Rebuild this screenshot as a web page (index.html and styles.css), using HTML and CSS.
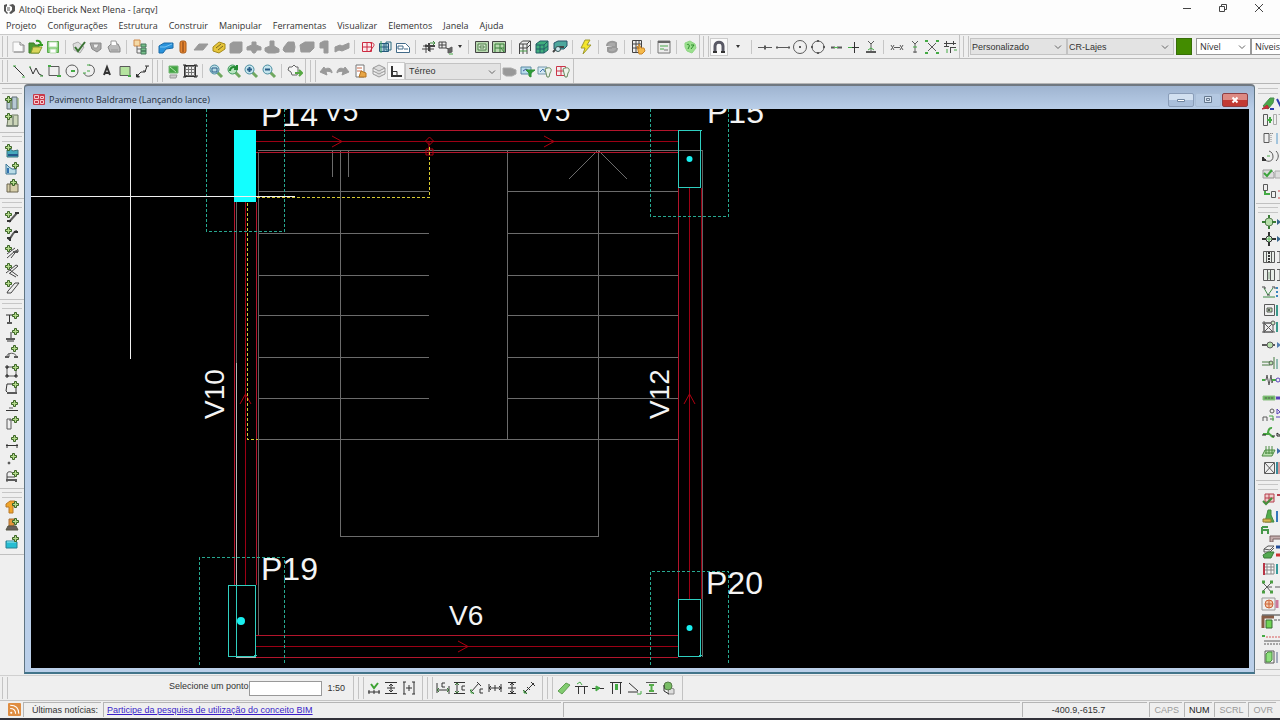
FILE: index.html
```html
<!DOCTYPE html>
<html lang="pt-BR">
<head>
<meta charset="utf-8">
<title>AltoQi Eberick Next Plena - [arqv]</title>
<link rel="stylesheet" href="styles.css">
</head>
<body>
<svg class="sprite" aria-hidden="true">
  <symbol id="plus" viewBox="0 0 7 7"><path d="M2.500 .5h2v2h2v2h-2v2h-2v-2h-2v-2h2z" fill="#b5dc8c" stroke="#3c6426"/></symbol>
  <symbol id="chev" viewBox="0 0 8 8"><path d="M1 2.500l3 3 3-3" fill="none" stroke="#666"/></symbol>
</svg>

<header class="titlebar">
  <svg class="logo" viewBox="0 0 12 12"><path d="M1 2l3-1v2l-1 1v4l2 2-1 1-3-3zM6 2l4-1 2 2v5l-4 3-2-1 3-3V4z" fill="#555"/><path d="M4 4h3v4H4z" fill="#aaa"/></svg>
  <h1 class="app-name">AltoQi Eberick Next Plena - [arqv]</h1>
  <div class="window-buttons">
    <button aria-label="Minimizar"><svg viewBox="0 0 10 10"><path d="M1 5.500h8"/></svg></button>
    <button aria-label="Restaurar"><svg viewBox="0 0 10 10"><path d="M1.500 3.500h5v5h-5zM3.500 3V1.500h5v5H7"/></svg></button>
    <button aria-label="Fechar"><svg viewBox="0 0 10 10"><path d="M1 1l8 8M9 1l-8 8"/></svg></button>
  </div>
</header>

<nav class="menubar">
  <button>Projeto</button><button>Configurações</button><button>Estrutura</button><button>Construir</button><button>Manipular</button><button>Ferramentas</button><button>Visualizar</button><button>Elementos</button><button>Janela</button><button>Ajuda</button>
</nav>

<div class="toolbar main" role="toolbar" aria-label="Principal">
  <div class="band">
    <div class="group n3">
      <button aria-label="Novo"><svg viewBox="0 0 16 16"><path d="M3 3h7l3 3v7H3z" fill="#fafafa" stroke="#bbb"/><path d="M10 3v3h4v7H4" stroke="#888"/></svg></button>
      <button aria-label="Abrir"><svg viewBox="0 0 16 16"><path d="M2 4h5l1 2h4v8H2z" fill="#4c9a33" stroke="#3b7d28"/><path d="M4 14l2-6h9l-3 6z" fill="#d9d65a" stroke="#8a9a30"/><path d="M9 2c3-1 5 1 5 4M11 6h5" stroke="#2f9a20" stroke-width="2"/></svg></button>
      <button aria-label="Salvar"><svg viewBox="0 0 16 16"><path d="M2.500 2.500h11v11h-11z" fill="#7fcf72" stroke="#5aa84d"/><path d="M4 3h8v5H4zM5 10h6v4H5z" fill="#fff" stroke="#b9deb2"/></svg></button>
    </div><i class="sep"></i>
    <div class="group n3">
      <button aria-label="Configurar projeto"><svg viewBox="0 0 16 16"><path d="M2 5l5-2 6 5-4 6-6-3z" fill="#ddd" stroke="#aaa"/><path d="M4 8l3 4 7-9" stroke="#397232" stroke-width="2"/></svg></button>
      <button aria-label="Plotter"><svg viewBox="0 0 16 16"><path d="M2 4h11v6l-4 3-5-3z" fill="#aaa" stroke="#888"/><path d="M5 5h6l-2 4H6z" fill="#eee" stroke="#999"/></svg></button>
      <button aria-label="Imprimir"><svg viewBox="0 0 16 16"><path d="M2 8l3-3h7l2 4v4H4z" fill="#bbb" stroke="#888"/><path d="M5 6V2h5l1 4M5 11h7" fill="#fff" stroke="#999"/></svg></button>
    </div><i class="sep"></i>
    <div class="group n1">
      <button aria-label="Árvore do projeto"><svg viewBox="0 0 16 16"><path d="M2 1h6v6H2z" fill="#f4d9a6" stroke="#d08a4a"/><path d="M5 7v7h4M5 10h4" stroke="#666"/><path d="M9 5h5v3H9zM9 9h5v3H9zM9 12h5v3H9z" fill="#76c08a" stroke="#44775a"/></svg></button>
    </div><i class="sep"></i>
    <div class="group n11">
      <button aria-label="Viga"><svg viewBox="0 0 16 16"><path d="M1 7l5-3h9v5l-7 1-3 4H1z" fill="#2a93dc" stroke="#1a6aa8"/><path d="M2 8h5l7-3" stroke="#79c4f2"/></svg></button>
      <button aria-label="Pilar"><svg viewBox="0 0 16 16"><rect x="5" y="2" width="6" height="12" rx="2" fill="#e58530" stroke="#a85a18"/><path d="M8 3v10" stroke="#7c3c10"/></svg></button>
      <button aria-label="Laje"><svg viewBox="0 0 16 16"><path d="M1 11l5-6h9l-5 6z" fill="#999" stroke="#999"/></svg></button>
      <button aria-label="Escada"><svg viewBox="0 0 16 16"><path d="M2 8l6-5 6 2v5l-6 4-6-2z" fill="#e6c53a" stroke="#a58a1c"/><path d="M5 9l5-4M7 11l5-4" stroke="#7c6a20"/></svg></button>
      <button aria-label="Sólido"><svg viewBox="0 0 16 16"><path d="M2 5l3-2h9v9l-2 2H2z" fill="#999" stroke="#999"/></svg></button>
      <button aria-label="Bloco"><svg viewBox="0 0 16 16"><path d="M6 3h4v3l5 2v3h-4l-2 3H7l-2-3H1V8l5-2z" fill="#999" stroke="#999"/></svg></button>
      <button aria-label="Sapata"><svg viewBox="0 0 16 16"><path d="M6 2h4v5l5 3v3l-4 1H4l-3-2v-3l5-2z" fill="#999" stroke="#999"/></svg></button>
      <button aria-label="Tubulão"><svg viewBox="0 0 16 16"><path d="M3 8l4-5h6l1 5-1 5H4l-2-2z" fill="#999" stroke="#999"/></svg></button>
      <button aria-label="Reservatório"><svg viewBox="0 0 16 16"><path d="M1 6l5-3h9v6l-4 4H2z" fill="#999" stroke="#999"/></svg></button>
      <button aria-label="Muro"><svg viewBox="0 0 16 16"><path d="M3 4l4-2h4v12H7V9H3z" fill="#999" stroke="#999"/></svg></button>
      <button aria-label="Rampa"><svg viewBox="0 0 16 16"><path d="M1 8l5-2 2 1 7-3v5l-7 3-3-1-4 2z" fill="#999" stroke="#999"/></svg></button>
    </div><i class="sep"></i>
    <div class="group n3">
      <button aria-label="Croqui"><svg viewBox="0 0 16 16"><path d="M2.500 3.500h9v9h-9zM7 3v10M2 8h9" stroke="#cc2940" fill="#fbe9ec"/><path d="M10 4c4-1 5 2 3 4l-3 4" stroke="#cc2940"/></svg></button>
      <button aria-label="Pórtico"><svg viewBox="0 0 16 16"><path d="M2.500 4.500h9v8h-9zM7 4v9M2 8h10" stroke="#22577a" fill="#a9cbd9"/><path d="M9 3h5v8h-5z" stroke="#296a80"/><path d="M4 2v12" stroke="#37a060"/></svg></button>
      <button aria-label="Prancha"><svg viewBox="0 0 16 16"><path d="M1.500 4.500h9l4 4v5h-13z" fill="#fff" stroke="#416a88"/><path d="M3 7h5v3H3zM9 10h4" stroke="#416a88"/></svg></button>
    </div><i class="sep"></i>
    <div class="group n2">
      <button aria-label="Subir pavimento"><svg viewBox="0 0 16 16"><path d="M2 7h12M1 10h12M5 5v9M9 6v7" stroke="#444"/><path d="M4 7h10M8 4v8" stroke="#444" stroke-width="2"/><path d="M9 4h5l-2-2M14 4l-2 2" stroke="#3d8a3d"/></svg></button>
      <button aria-label="Descer pavimento"><svg viewBox="0 0 16 16"><path d="M1 3h7v6H1zM4 3v6M1 6h7M8 9l5 2" stroke="#444"/><path d="M10 10l4-2v5l-4 1z" fill="#666"/><path d="M11 15h4" stroke="#44aa44"/></svg></button>
    </div>
    <button class="caret" aria-label="Mais pavimentos"></button><i class="sep"></i>
    <div class="group n2">
      <button aria-label="Detalhamento"><svg viewBox="0 0 16 16"><path d="M1.500 2.500h13v11h-13z" fill="#b9d9b0" stroke="#444"/><path d="M4 5h8v6H4zM6 7h4v2H6z" fill="#ddeed8" stroke="#4f7f4a"/></svg></button>
      <button aria-label="Formas"><svg viewBox="0 0 16 16"><path d="M1.500 2.500h13v11h-13z" fill="#b9d9b0" stroke="#444"/><path d="M4 5h9v8M4 5v8M4 9h9M9 5v8M10 9l3 4" stroke="#39803a"/></svg></button>
    </div><i class="sep"></i>
    <div class="group n3">
      <button aria-label="Pórtico unifilar"><svg viewBox="0 0 16 16"><path d="M2.500 15V5l3-3h8v10M2 5h8l3-3M10 5v10M2 9h8l3-3M6 5v10" stroke="#444"/><path d="M3 12h7" stroke="#46a046"/></svg></button>
      <button aria-label="Pórtico 3D"><svg viewBox="0 0 16 16"><path d="M2 5l4-3h8v9l-4 3H2z" fill="#3fae7c" stroke="#235d66"/><path d="M2 6h8l4-4M10 6v8M2 10h8l4-3M6 6v8" stroke="#235d66"/></svg></button>
      <button aria-label="Visualizar 3D"><svg viewBox="0 0 16 16"><path d="M2 4l4-2h9v5l-3 3H2z" fill="#4da79d" stroke="#28556a"/><path d="M1 13l5-5h6" stroke="#444" stroke-width="2"/><circle cx="6" cy="10" r="2.500" fill="#cde6ee" stroke="#355"/></svg></button>
    </div><i class="sep"></i>
    <div class="group n1"><button aria-label="Processar"><svg viewBox="0 0 16 16"><path d="M7 1h5l-3 5h4l-8 9 2-6H3z" fill="#f4e62c" stroke="#9f9a30"/></svg></button></div><i class="sep"></i>
    <div class="group n1"><button aria-label="Recalcular"><svg viewBox="0 0 16 16"><path d="M3 7c0-5 7-5 9-3v4H8M13 9c0 5-7 5-9 3V9h4" fill="#aaa" stroke="#999" stroke-width="2"/></svg></button></div><i class="sep"></i>
    <div class="group n1"><button aria-label="Selecionar painel"><svg viewBox="0 0 16 16"><path d="M2.500 1.500h9v12h-9zM2 5h10M2 9h8M6 1v13M9 1v8" stroke="#444"/><path d="M7 7l2 3V5l2 4 3 0 1 3-3 3H9z" fill="#f5b94a" stroke="#c98528"/></svg></button></div><i class="sep"></i>
    <div class="group n1"><button aria-label="Relatório"><svg viewBox="0 0 16 16"><path d="M2 2h12v12H2z" fill="#ececec" stroke="#777"/><path d="M2 3h12" stroke="#666" stroke-width="2"/><path d="M4 7h8M4 10h4" stroke="#4aa84a"/><path d="M8 11h4" stroke="#777"/></svg></button></div><i class="sep"></i>
    <div class="group n1"><button aria-label="Ajuda do programa"><svg viewBox="0 0 16 16"><path d="M3 4l5-2 5 3 1 4-4 5-5-2-2-4z" fill="#9be08e" stroke="#8fd684"/><path d="M5 6c1-2 3 0 2 2l-1 2M9 6h3l-3 4" stroke="#2d8c2b"/></svg></button></div>
  </div>
  <div class="band">
    <div class="group n1"><button class="pressed" aria-label="Capturar"><svg viewBox="0 0 16 16"><path d="M4 13V7c0-5 8-5 8 0v6" stroke="#5a5a66" stroke-width="3"/><path d="M2 13h4M10 13h4" stroke="#333" stroke-width="2"/></svg></button></div>
    <button class="caret wide" aria-label="Opções de captura"></button><i class="sep"></i>
    <div class="group n7">
      <button aria-label="Ponto médio"><svg viewBox="0 0 16 16"><path d="M1 8.500h14"/><path d="M8 6.500v4" stroke-width="2"/></svg></button>
      <button aria-label="Ponto final"><svg viewBox="0 0 16 16"><path d="M1 8.500h14M2 7v3M14 7v3"/></svg></button>
      <button aria-label="Centro"><svg viewBox="0 0 16 16"><circle cx="8" cy="8" r="6.500"/><path d="M7 8h2" stroke-width="2"/></svg></button>
      <button aria-label="Quadrante"><svg viewBox="0 0 16 16"><circle cx="8" cy="8" r="6"/><path d="M8 1v2M8 13v2M1 8h2M13 8h2" stroke-width="2"/></svg></button>
      <button aria-label="Ponto próximo"><svg viewBox="0 0 16 16"><path d="M3 8.500h4M9 8.500h5" stroke-width="2"/><path d="M6 8.500h4" stroke="#5b5"/></svg></button>
      <button aria-label="Interseção"><svg viewBox="0 0 16 16"><path d="M3 8.500h11M9.500 3v11" stroke="#333"/><path d="M3 8.500h4" stroke="#4a4"/></svg></button>
      <button aria-label="Perpendicular"><svg viewBox="0 0 16 16"><path d="M5 2l3 3 3-3M8 5v8"/><path d="M3 13h10" stroke-width="2"/><path d="M5 11l3-2 3 2" stroke="#4a4"/></svg></button>
    </div><i class="sep"></i>
    <div class="group n4">
      <button aria-label="Relativo"><svg viewBox="0 0 16 16"><path d="M2 6l3 5M5 6l-3 5M11 6l3 5M14 6l-3 5M5 8.500h6"/></svg></button>
      <button aria-label="Ortogonal"><svg viewBox="0 0 16 16"><path d="M5 2l3 3 3-3M8 5v9M6 13h4"/><path d="M6 8h4" stroke="#4a4"/></svg></button>
      <button aria-label="Cruzamento"><svg viewBox="0 0 16 16"><path d="M4 4l8 8M12 4l-8 8"/><path d="M1 2h3M12 2h3M1 14h3M12 14h3" stroke="#4a4" stroke-width="2"/></svg></button>
      <button aria-label="Múltiplo"><svg viewBox="0 0 16 16"><path d="M2 4.500h12M4.500 2v5M8 8.500h6M8.500 8v6M11.500 2v4M2 7.500h5" stroke="#444"/><path d="M12 11h3M5 10v4" stroke="#4a4"/></svg></button>
    </div>
  </div>
  <div class="band open">
    <label class="combo c-style"><select aria-label="Estilo"><option>Personalizado</option></select><svg><use href="#chev"/></svg></label>
    <label class="combo c-layer"><select aria-label="Camada"><option>CR-Lajes</option></select><svg><use href="#chev"/></svg></label>
    <button class="swatch" aria-label="Cor"></button>
    <label class="combo white c-level"><select aria-label="Nível"><option>Nível</option></select><svg><use href="#chev"/></svg></label>
    <label class="combo white c-levels"><select aria-label="Níveis"><option>Níveis</option></select></label>
  </div>
</div>

<div class="toolbar draw" role="toolbar" aria-label="Desenho">
  <div class="band">
    <div class="group n8">
      <button aria-label="Linha"><svg viewBox="0 0 16 16"><path d="M3 3l10 10" stroke="#333"/><path d="M2 3h3M11 14h3" stroke="#4a4"/></svg></button>
      <button aria-label="Polilinha"><svg viewBox="0 0 16 16"><path d="M2 4l3 7 3-6 3 6 4 2" stroke="#333"/><path d="M1 4h2M12 13h3" stroke="#4a4"/></svg></button>
      <button aria-label="Retângulo"><svg viewBox="0 0 16 16"><path d="M3 3.500h10v9H3z"/><path d="M2 3h3M11 13h4" stroke="#4a4" stroke-width="2"/></svg></button>
      <button aria-label="Círculo"><svg viewBox="0 0 16 16"><circle cx="8" cy="8" r="6"/><path d="M7 8h4" stroke="#4a4" stroke-width="2"/></svg></button>
      <button aria-label="Arco"><svg viewBox="0 0 16 16"><path d="M8 2c7 0 7 10 1 11-4 1-6-2-6-3"/><path d="M6 8h3M2 10h3M6 2h3" stroke="#4a4"/></svg></button>
      <button aria-label="Texto"><svg viewBox="0 0 16 16"><path d="M5 12l3-8 3 8M6 10h4" stroke="#333" stroke-width="2"/></svg></button>
      <button aria-label="Hachura"><svg viewBox="0 0 16 16"><path d="M3 3.500h10v9H3z" fill="#b5e39f"/><path d="M11 13h3" stroke="#4a4" stroke-width="2"/></svg></button>
      <button aria-label="Chamada"><svg viewBox="0 0 16 16"><path d="M3 13l4-4h4l2-6" stroke="#333"/><path d="M2.500 11v3h3zM11 3h4M9 8h3" fill="#333" stroke="#333"/></svg></button>
    </div>
  </div>
  <div class="band">
    <div class="group n2">
      <button aria-label="Redesenhar"><svg viewBox="0 0 16 16"><path d="M4 3h9v7H4z" fill="#44a444" stroke="#76b876"/><path d="M5 12h7l-1 3H5z" fill="#ccc" stroke="#999"/><path d="M5 4l6 5" stroke="#b4e6b0"/></svg></button>
      <button aria-label="Janela de zoom"><svg viewBox="0 0 16 16"><path d="M3.500 3.500h9v9h-9zM3 6.500h10M3 9.500h10M6.500 3v10M9.500 3v10" stroke="#777"/><path d="M2.500 2.500h11v11h-11z" stroke="#333"/><path d="M1 2h3v2M12 2h3v2M1 14h3v-2M12 14h3v-2" stroke="#222"/></svg></button>
    </div><i class="sep"></i>
    <div class="group n4">
      <button aria-label="Zoom janela"><svg viewBox="0 0 16 16"><path d="M9 9l5 5" stroke="#70a860" stroke-width="3"/><circle cx="6.500" cy="6.500" r="4.500" fill="#b8dbe5" stroke="#4b8da0"/><path d="M4 5h5v4H4z" stroke="#295c87"/></svg></button>
      <button aria-label="Zoom anterior"><svg viewBox="0 0 16 16"><path d="M9 9l5 5" stroke="#70a860" stroke-width="3"/><circle cx="6.500" cy="6.500" r="4.500" fill="#b8e5c0" stroke="#3b985c"/><path d="M4 8c0-4 4-5 7-3M11 2v4H8" stroke="#238a32" stroke-width="2"/></svg></button>
      <button aria-label="Ampliar"><svg viewBox="0 0 16 16"><path d="M9 9l5 5" stroke="#70a860" stroke-width="3"/><circle cx="6.500" cy="6.500" r="4.500" fill="#c4e4ed" stroke="#4b8da0"/><path d="M4 6.500h5M6.500 4v5" stroke="#295c87" stroke-width="2"/></svg></button>
      <button aria-label="Reduzir"><svg viewBox="0 0 16 16"><path d="M9 9l5 5" stroke="#70a860" stroke-width="3"/><circle cx="6.500" cy="6.500" r="4.500" fill="#c4e4ed" stroke="#4b8da0"/><path d="M4 6.500h5" stroke="#295c87" stroke-width="2"/></svg></button>
    </div><i class="sep"></i>
    <div class="group n1"><button aria-label="Mover vista"><svg viewBox="0 0 16 16"><path d="M2 4h3l2-2 2 2h2v5l-1 3H5L4 9 1 7z" fill="#f6f6f6" stroke="#666"/><path d="M8 10h6M12 7l3 3-3 3" stroke="#56a843" stroke-width="2"/></svg></button></div>
  </div>
  <div class="band">
    <div class="group n5">
      <button aria-label="Desfazer"><svg viewBox="0 0 16 16"><path d="M2 9l4-5 1 2c4-2 7 0 7 4-2-2-4-2-6-1l1 3z" fill="#999" stroke="#999"/></svg></button>
      <button aria-label="Refazer"><svg viewBox="0 0 16 16"><path d="M14 9l-4-5-1 2c-4-2-7 0-7 4 2-2 4-2 6-1l-1 3z" fill="#999" stroke="#999"/></svg></button>
      <button aria-label="Propriedades"><svg viewBox="0 0 16 16"><path d="M3 2h8v12H3z" fill="#fff" stroke="#777"/><path d="M4 5h5M4 8h5" stroke="#c64"/><path d="M8 8l5 2v4H6z" fill="#e8a646" stroke="#b57422"/></svg></button>
      <button aria-label="Níveis de desenho"><svg viewBox="0 0 16 16"><path d="M2 5l6-3 6 3-6 3zM2 8l6 3 6-3M2 11l6 3 6-3M2 5v6M14 5v6" fill="#ddd" stroke="#999"/></svg></button>
      <button class="pressed" aria-label="Modo ortogonal"><svg viewBox="0 0 16 16"><path d="M4 3v10h10" stroke="#333" stroke-width="2"/><path d="M4 8.500h5v5" stroke="#333"/></svg></button>
    </div>
    <label class="combo c-floor"><select aria-label="Pavimento"><option>Térreo</option></select><svg><use href="#chev"/></svg></label>
    <div class="group n4">
      <button aria-label="Piso anterior"><svg viewBox="0 0 16 16"><path d="M1 5h8l5 2v4l-4 2H4l-3-2z" fill="#999" stroke="#aaa"/></svg></button>
      <button aria-label="Filtrar"><svg viewBox="0 0 16 16"><path d="M1 4h10v7H1z" fill="#b7dcec" stroke="#5b89a2"/><path d="M3 8l3-2 3 2" stroke="#459"/><path d="M6 7h9l-4 3v4l-2-1v-3z" fill="#2f9f36" stroke="#2f8f36"/></svg></button>
      <button aria-label="Pesquisar vista"><svg viewBox="0 0 16 16"><path d="M1 4h9v7H1z" fill="#d4e8f4" stroke="#79a"/><path d="M3 9l3-3 2 3" stroke="#47a"/><path d="M8 6c5-3 8 0 5 4l-1 4h-2l-1-4z" fill="#eef5ea" stroke="#698a60"/></svg></button>
      <button aria-label="Pesquisar croqui"><svg viewBox="0 0 16 16"><path d="M1.500 3.500h9v9h-9zM6 3v10M1 8h10" stroke="#cc3448"/><path d="M8 6c5-3 8 0 5 4l-1 4h-2l-1-4z" fill="#eef5ea" stroke="#698a60"/></svg></button>
    </div>
  </div>
</div>

<main class="workspace">
  <aside class="side" role="toolbar" aria-label="Lançamento">
    <div class="stack m2">
      <button aria-label="Adicionar pilar"><svg viewBox="0 0 16 16"><path d="M3 4h4v10H3zM8 2h5v12H8z" fill="#b7c9d3" stroke="#5c6a72"/><path d="M7 4v10M14 3v11" stroke="#7fa05e"/><use href="#plus" x="1" y="1" width="7" height="7"/></svg></button>
      <button aria-label="Adicionar seção"><svg viewBox="0 0 16 16"><path d="M4 6l4-3h6v11H3z" fill="#ccd5b9" stroke="#6f7a64"/><path d="M9 4v9M2 14h12" stroke="#56645a"/><use href="#plus" x="1" y="1" width="7" height="7"/></svg></button>
    </div>
    <div class="stack m3">
      <button aria-label="Adicionar laje"><svg viewBox="0 0 16 16"><path d="M3 7l3-1 3 2 5-1v7H3z" fill="#46a9bd" stroke="#3b7480"/><path d="M4 12h10" stroke="#24578a" stroke-width="2"/><use href="#plus" x="1" y="1" width="7" height="7"/></svg></button>
      <button aria-label="Adicionar rampa"><svg viewBox="0 0 16 16"><path d="M2 4v10h10V9H8L5 7z" fill="#b9dbe6" stroke="#3e7795"/><path d="M4 8v5" stroke="#3272b0" stroke-width="2"/><use href="#plus" x="8" y="2" width="7" height="7"/></svg></button>
      <button aria-label="Adicionar abertura"><svg viewBox="0 0 16 16"><path d="M3 6h11v8H3zM6 6v8" fill="#d7cfaa" stroke="#6a654e"/><use href="#plus" x="6" y="1" width="7" height="7"/></svg></button>
    </div>
    <div class="stack m5">
      <button aria-label="Adicionar barra"><svg viewBox="0 0 16 16"><path d="M5 13l8-9" stroke-width="2"/><path d="M3 12h4M11 4h4" stroke="#333" stroke-width="2"/><use href="#plus" x="1" y="2" width="7" height="7"/></svg></button>
      <button aria-label="Adicionar barra curva"><svg viewBox="0 0 16 16"><path d="M4 13c4 1 3-7 9-8" stroke-width="2"/><path d="M3 12h3v3M10 6h4" stroke="#333" stroke-width="2"/><use href="#plus" x="1" y="1" width="7" height="7"/></svg></button>
      <button aria-label="Adicionar viga"><svg viewBox="0 0 16 16"><path d="M3 14l8-7h4M7 14l7-9M3 10l8-6" stroke="#444"/><path d="M9 8h5" stroke-width="2"/><use href="#plus" x="1" y="1" width="7" height="7"/></svg></button>
      <button aria-label="Adicionar cruzamento"><svg viewBox="0 0 16 16"><path d="M2 11l10-8 2 1-8 7M6 8l8 6M5 11l7 4" stroke="#444"/><use href="#plus" x="1" y="1" width="7" height="7"/></svg></button>
      <button aria-label="Adicionar parede"><svg viewBox="0 0 16 16"><path d="M4 12l7-8h4l-8 10H3z" fill="#eee" stroke="#444"/><use href="#plus" x="1" y="1" width="7" height="7"/></svg></button>
    </div>
    <div class="stack m10">
      <button aria-label="Adicionar apoio"><svg viewBox="0 0 16 16"><path d="M2 5h7M5.500 5v8M3 13h5" stroke="#333"/><path d="M3 13h5" stroke-width="2"/><use href="#plus" x="8" y="2" width="7" height="7"/></svg></button>
      <button aria-label="Adicionar carga"><svg viewBox="0 0 16 16"><path d="M7 5v8M3 14h7" stroke="#333"/><path d="M2 12h9" stroke-width="2"/><use href="#plus" x="8" y="1" width="7" height="7"/></svg></button>
      <button aria-label="Adicionar arco"><svg viewBox="0 0 16 16"><path d="M2 12c2-5 9-5 11 0M5 8v4"/><path d="M1 12h4M10 12h4" stroke-width="2"/><use href="#plus" x="7" y="0" width="7" height="7"/></svg></button>
      <button aria-label="Adicionar quadro"><svg viewBox="0 0 16 16"><path d="M3 4h9v9H3z"/><path d="M1 4h4M10 13h4M1 13h4M3 2v4M3 11v4M12 11v4" stroke="#222"/><use href="#plus" x="8" y="1" width="7" height="7"/></svg></button>
      <button aria-label="Adicionar contorno"><svg viewBox="0 0 16 16"><path d="M3 4h9v9H4l-2-2z" stroke="#333"/><path d="M3 13h10" stroke-width="2"/><use href="#plus" x="8" y="1" width="7" height="7"/></svg></button>
      <button aria-label="Adicionar base"><svg viewBox="0 0 16 16"><path d="M2 12.500h12" stroke="#333"/><path d="M5 10h4"/><use href="#plus" x="7" y="2" width="7" height="7"/></svg></button>
      <button aria-label="Adicionar retângulo"><svg viewBox="0 0 16 16"><path d="M3 4h4v10H3zM5 5h8" /><use href="#plus" x="8" y="1" width="7" height="7"/></svg></button>
      <button aria-label="Adicionar cota"><svg viewBox="0 0 16 16"><path d="M2 12.500h12M3 11v4M13 11v4" stroke="#333"/><use href="#plus" x="7" y="2" width="7" height="7"/></svg></button>
      <button aria-label="Adicionar ponto"><svg viewBox="0 0 16 16"><circle cx="5" cy="12" r="1" fill="#333"/><use href="#plus" x="6" y="2" width="7" height="7"/></svg></button>
      <button aria-label="Adicionar texto"><svg viewBox="0 0 16 16"><path d="M3 14V6c0-3 5-3 6 0M3 9h8" stroke="#444"/><path d="M2 12h10v2" stroke-width="2"/><use href="#plus" x="8" y="2" width="7" height="7"/></svg></button>
    </div>
    <div class="stack m3 last">
      <button aria-label="Adicionar estaca"><svg viewBox="0 0 16 16"><path d="M2 5l4-3h5v5H9v7H5V8H2z" fill="#f0a52a" stroke="#b8782a"/><use href="#plus" x="8" y="2" width="7" height="7"/></svg></button>
      <button aria-label="Adicionar sapata"><svg viewBox="0 0 16 16"><path d="M5 3h5v7H5z" fill="#e2943b" stroke="#a86f35"/><path d="M2 14l2-4h8l2 4z" fill="#665f5b" stroke="#554"/><use href="#plus" x="8" y="2" width="7" height="7"/></svg></button>
      <button aria-label="Adicionar viga baldrame"><svg viewBox="0 0 16 16"><path d="M2 7h8l3 1v6H2z" fill="#25bdd2" stroke="#277f91"/><path d="M3 8h9" stroke="#9fe5ee"/><use href="#plus" x="8" y="1" width="7" height="7"/></svg></button>
    </div>
  </aside>

  <section class="mdi" aria-label="Pavimento Baldrame">
    <header class="mdi-title">
      <svg class="mdi-icon" viewBox="0 0 12 11"><rect width="12" height="11" rx="1" fill="#c83a4a"/><path d="M1.500 1.500h4v3h-4zM7.500 2.500h3v2h-3zM1.500 6.500h4v3h-4zM7.500 6.500h3v3h-3z" fill="none" stroke="#f6c9ce"/></svg>
      <h2>Pavimento Baldrame (Lançando lance)</h2>
      <div class="mdi-buttons">
        <button aria-label="Minimizar janela"><svg viewBox="0 0 10 8"><path d="M1.500 3.500h7v2h-7z" fill="#fff" stroke="#7186a0"/></svg></button>
        <button class="flat" aria-label="Restaurar janela"><svg viewBox="0 0 10 8"><path d="M1.500 .5h7v6h-7zM3.500 2.500h3v2h-3z" fill="#d8e4f2" stroke="#66798f"/></svg></button>
        <button class="close" aria-label="Fechar janela"><svg viewBox="0 0 10 8"><path d="M2.500 1.500l5 5M7.500 1.500l-5 5" stroke="#fff" stroke-width="2"/></svg></button>
      </div>
    </header>
    <svg class="drawing" role="img" aria-label="Planta do pavimento">
      <g transform="translate(-31 -109)">
        <g class="stairs">
          <path d="M258 150.500H702M258 191.500H429M258 233.500H429M258 275.500H429M258 315.500H429M258 357.500H429M258 398.500H429M258 439.500H678"/>
          <path d="M507 191.500H678M507 233.500H678M507 275.500H678M507 315.500H678M507 357.500H678M507 398.500H678"/>
          <path d="M507.500 150V439M340.500 150V536.500H598.500V150M332.500 151V177M348.500 151V177"/>
          <path class="smooth" d="M569 179L598 150L627 179"/>
        </g>
        <g class="beams">
          <path class="axis" d="M256 141.500H678M256 646.500H678M245.500 202V585M689.500 188V599"/>
          <path d="M256 130.500H678M256 152.500H678M256 635.500H678"/>
          <path d="M234.500 202V585M256.500 202V585M678.500 188V599M256 657.500H678"/>
          <path class="axis" d="M701.500 188V599"/>
          <path class="arrows" d="M332 136L342 141.500L332 147M544 136L554 141.500L544 147M458 641L468 646.500L458 652M240 404L245.500 394L251 404M684 404L689.500 394L695 404"/>
          <path class="arrows" d="M429.500 137l4 4-4 4-4-4zM426 149h7v6h-7zM429 141v14"/>
        </g>
        <path class="outline" d="M236.500 202V364M258.500 152V635M702.500 150V657"/>
        <path class="edge" d="M236.500 363V657H256"/>
        <g class="offset"><path d="M247.500 198V439.500H258"/><path d="M247 197.500H429.500V147"/></g>
        <g class="footing">
          <path d="M206.500 109V231.500H284.500V109"/>
          <path d="M650.500 109V216.500H728.500V109"/>
          <path d="M199.500 665V557.500H284.500V665"/>
          <path d="M650.500 665V571.500H728.500V665"/>
        </g>
        <g class="columns">
          <rect x="678.500" y="130.500" width="22" height="57"/><circle cx="689.500" cy="159" r="3"/>
          <rect x="228.500" y="585.500" width="27" height="71"/><circle cx="241" cy="621" r="4"/>
          <rect x="678.500" y="599.500" width="22" height="57"/><circle cx="689.500" cy="628" r="3"/>
          <path d="M236.500 586V657M699 130.500h3M699 655.500h3M254 655.500h3"/>
          <rect class="selected" x="234" y="130" width="22" height="72"/>
        </g>
        <path class="cursor" d="M130.500 109V359M31 196.500H295"/>
        <g class="column-names">
          <text x="261" y="126">P14</text><text x="707" y="123">P15</text><text x="261" y="580">P19</text><text x="706" y="594">P20</text>
        </g>
        <g class="beam-names">
          <text x="324" y="121">V5</text><text x="536" y="121">V5</text><text x="449" y="625">V6</text>
          <text transform="translate(224 419) rotate(-90)">V10</text><text transform="translate(669 419) rotate(-90)">V12</text>
        </g>
      </g>
    </svg>
  </section>

  <aside class="side right" role="toolbar" aria-label="Edição">
    <div class="stack m6">
      <button aria-label="Apagar"><svg viewBox="0 0 22 16"><path d="M2 11l7-8h4l-1 5-5 6z" fill="#4ca84a" stroke="#4a8c50"/><path d="M1 14l5-4 2 3z" fill="#d32c38" stroke="#b22c38"/><path d="M9 14h4M16 4l4 8" stroke="#2d3cae" stroke-width="2"/></svg></button>
      <button aria-label="Mover"><svg viewBox="0 0 22 16"><path d="M2.500 2.500h4v11h-4z"/><path d="M12.500 2.500h3v10h-3zM17.500 2.500h3v10" stroke="#aaa"/><path d="M6 8h5M9 5v6" stroke="#4a4" stroke-width="2"/></svg></button>
      <button aria-label="Espelhar"><svg viewBox="0 0 22 16"><path d="M3 3.500h5v9H3z"/><path d="M10 3v10M9 3.500h3" stroke="#888" stroke-dasharray="1"/><path d="M16 3v11" stroke="#579acb"/></svg></button>
      <button aria-label="Rotacionar"><svg viewBox="0 0 22 16"><path d="M3 10c2 5 9 4 9-1 0-3-1-5-4-6M15 3c3 3 3 7 0 10"/><path d="M2 9v3h3" stroke="#333" stroke-width="2"/><path d="M6 8h3" stroke="#4a4"/></svg></button>
      <button aria-label="Confirmar"><svg viewBox="0 0 22 16"><path d="M2 5h8l3 3v5H2z" fill="#ddd" stroke="#999"/><path d="M3 8l3 3 5-6" stroke="#3ba33b" stroke-width="2"/><path d="M14 6h6v7h-6z" fill="#ddd" stroke="#aaa"/></svg></button>
      <button aria-label="Copiar"><svg viewBox="0 0 22 16"><path d="M2.500 1.500h4v6h-4zM10.500 8.500h4v6h-4z"/><path d="M4 8v3h5" stroke="#4a4" stroke-width="2"/><path d="M17 8h4v7h-4" stroke="#c44"/></svg></button>
    </div>
    <div class="stack m15">
      <button aria-label="Posição"><svg viewBox="0 0 22 16"><circle cx="8" cy="8" r="4" fill="#b6dfaa" stroke="#5d7e55"/><path d="M8 1v3M8 12v3M1 8h4M11 8h4" stroke="#397c35" stroke-width="2"/><path d="M16 5l4 3-4 3z" fill="#37658c" stroke="none"/></svg></button>
      <button aria-label="Eixo"><svg viewBox="0 0 22 16"><circle cx="8" cy="8" r="3" stroke="#333"/><path d="M8 1v4M8 11v4M1 8h4M11 8h4" stroke="#333" stroke-width="2"/><path d="M8 5v6M5 8h6" stroke="#5b5"/><path d="M16 5l4 3-4 3z" fill="#37658c" stroke="none"/></svg></button>
      <button aria-label="Seção dupla"><svg viewBox="0 0 22 16"><path d="M2.500 2.500h11v11h-11zM5.500 3v10M10.500 3v10" fill="#e9eee9"/><path d="M8 3v10" stroke="#333" stroke-width="2" stroke-dasharray="2 1"/><path d="M16 2.500h3v11h-3"/></svg></button>
      <button aria-label="Seção simples"><svg viewBox="0 0 22 16"><path d="M2.500 2.500h11v11h-11zM6.500 3v10M9.500 3v10" fill="#e9eee9"/><path d="M8 5v7" stroke="#8a8"/><path d="M16 2.500h3v11h-3"/></svg></button>
      <button aria-label="Nós"><svg viewBox="0 0 22 16"><path d="M2 13h12M3 4l4 7 5-7" stroke="#3d8a47"/><path d="M1 3h3v2M11 3h3v2M6 11h3" stroke="#444"/><path d="M16 3v10" stroke="#3885bd" stroke-width="2" stroke-dasharray="2"/></svg></button>
      <button aria-label="Furo"><svg viewBox="0 0 22 16"><path d="M3.500 2.500h10v11h-10z"/><path d="M6 6h5v4H6z" fill="#b6dfaa"/><path d="M8 7v2" stroke-width="2"/><path d="M16 3v11" stroke="#3b9a8b" stroke-width="2"/></svg></button>
      <button aria-label="Grelha"><svg viewBox="0 0 22 16"><path d="M3 4h9v9H3zM3 4l9 9M12 4l-9 9M1 4h13M3 2v12M1 13h13" /><circle cx="12" cy="4" r="2" fill="#cfe8c8"/><path d="M16 3v10" stroke="#3b9a8b" stroke-width="2"/></svg></button>
      <button aria-label="Articulação"><svg viewBox="0 0 22 16"><circle cx="9" cy="8" r="3" fill="#b6dfaa"/><path d="M1 8h5M12 8h2" stroke-width="2"/><path d="M16 5l4 3-4 3z" fill="#557fb2" stroke="none"/></svg></button>
      <button aria-label="Engaste"><svg viewBox="0 0 22 16"><circle cx="10" cy="8" r="2" fill="#b6dfaa"/><path d="M1 7h8M1 10h8M13 2v12" stroke="#467a40"/><path d="M16 4v10" stroke="#387"/></svg></button>
      <button aria-label="Mola"><svg viewBox="0 0 22 16"><path d="M3 8h2l1-5 2 10 2-10 1 8 1-3h2"/><path d="M1 8h3M11 8h4" stroke="#4a4" stroke-width="2"/><circle cx="17" cy="8" r="2" stroke="#5740b8"/></svg></button>
      <button aria-label="Régua"><svg viewBox="0 0 22 16"><path d="M2 6h12v4H2z" fill="#68b65c" stroke="#8bc084"/><path d="M5 7v2M8 7v2M11 7v2"/><path d="M15 8h5" stroke="#5740b8" stroke-width="3"/></svg></button>
      <button aria-label="Degrau"><svg viewBox="0 0 22 16"><path d="M2 14v-4h4v4M9 12h4"/><circle cx="11" cy="4" r="2"/><path d="M8 9h4v5" stroke="#4a4"/><path d="M16 2l3 3-3 2zM15 10h4" stroke="#5740b8"/></svg></button>
      <button aria-label="Curva"><svg viewBox="0 0 22 16"><path d="M2 9h5c0-7 4-6 4-6M6 8c4 0 4 5 7 4" stroke="#49a743" stroke-width="2"/><path d="M1 10h4M11 11h3M16 8l4 3h-4z" stroke="#222"/></svg></button>
      <button aria-label="Malha"><svg viewBox="0 0 22 16"><path d="M1 13l3-6h10l-3 6z" fill="#b7dfac" stroke="#4c8b43"/><path d="M5 3v8M8 3v8M11 3v8M4 10h8" stroke="#4c8b43"/><path d="M16 5l4 3-4 3z" fill="#3e6caa" stroke="none"/></svg></button>
      <button aria-label="Vazio"><svg viewBox="0 0 22 16"><path d="M3.500 2.500h10v11h-10z"/><path d="M4 3l9 10M13 3L4 13"/><path d="M16 2v12" stroke="#388b9b" stroke-width="2"/><path d="M18 2v12" stroke="#b44"/></svg></button>
    </div>
    <div class="stack m10 last">
      <button aria-label="Verificar croqui"><svg viewBox="0 0 22 16"><path d="M4 3h9v8H4zM8 3v8M4 7h9" stroke="#b63f4d" fill="#ecc"/><path d="M2 10l3 3 6-6" stroke="#448e3c" stroke-width="2"/><path d="M16 4h4v8" stroke="#b63f4d" stroke-width="2"/></svg></button>
      <button aria-label="Limpar"><svg viewBox="0 0 22 16"><path d="M7 2h3v5l3 7H4z" fill="#51ad4a" stroke="#438843"/><path d="M2 11h8v3H2z" fill="#d3b94e" stroke="#947b32"/><path d="M16 3v11" stroke="#37b" stroke-width="2"/></svg></button>
      <button aria-label="Renomear"><svg viewBox="0 0 22 16"><path d="M1 1h6M1 4h5M1 1v7M7 3v5" stroke="#46974a" stroke-width="2"/><path d="M9 10h12v3H12v3H9z" fill="#c4adad" stroke="#796363"/></svg></button>
      <button aria-label="Camadas"><svg viewBox="0 0 22 16"><path d="M3 5l4-3h6l-4 4zM3 5v3h6l4-4" fill="#eee"/><path d="M2 11l5-3h6l-3 6H3z" fill="#53a950" stroke="#3c7b38"/><path d="M15 3h5" stroke="#224c99" stroke-width="3"/><path d="M15 11h5" stroke="#c33" stroke-width="3"/></svg></button>
      <button aria-label="Tabela"><svg viewBox="0 0 22 16"><path d="M3 3h10v10H3zM3 6h10M3 9h10M6 3v10M10 3v10" stroke="#888" fill="#f8f8f8"/><path d="M3 2v12" stroke="#b93445" stroke-width="2"/><path d="M16 3v10" stroke="#399" stroke-width="2"/></svg></button>
      <button aria-label="Ligações"><svg viewBox="0 0 22 16"><path d="M2 4l4 4-4 4M6 8h5M10 4L6 8l4 5M14 8h7"/><path d="M1 3h3M9 3h3M1 13h3M9 13h3" stroke="#4a9d42" stroke-width="3"/></svg></button>
      <button aria-label="Região"><svg viewBox="0 0 22 16"><path d="M1 2h13v12H1z" stroke="#999"/><circle cx="8" cy="8" r="4" fill="#f2c8a9" stroke="#cc6538"/><path d="M4 8h8M8 4v8" stroke="#cc6538"/><path d="M16 4v8" stroke="#c79" stroke-width="3"/></svg></button>
      <button aria-label="Canto"><svg viewBox="0 0 22 16"><path d="M2 14V3h11" stroke="#865b45" stroke-width="3"/><path d="M1 1h20" stroke="#333"/><path d="M5 6h6v8H5z" fill="#70d354" stroke="#376b31"/><path d="M13 6h8" stroke-dasharray="3 1"/></svg></button>
      <button aria-label="Estilo de linha"><svg viewBox="0 0 22 16"><path d="M1 4h3" stroke="#4a4" stroke-width="2"/><path d="M5 5h16" stroke="#d75c5c" stroke-dasharray="2 1"/><path d="M3 9h18"/><path d="M3 12h18" stroke-dasharray="2 1"/></svg></button>
      <button aria-label="Bloco verde"><svg viewBox="0 0 22 16"><path d="M4 2h9v12H4z" fill="#eee"/><path d="M5 5l2-2h4v8l-2 2H5z" fill="#8de07c" stroke="#468a3c"/><path d="M16 3v11" stroke="#568" stroke-width="1"/></svg></button>
    </div>
  </aside>
</main>

<div class="toolbar command" role="toolbar" aria-label="Comandos">
  <div class="band prompt">
    <label for="cmd">Selecione um ponto</label><input id="cmd" type="text"><span class="scale">1:50</span>
  </div>
  <div class="band">
    <div class="group n3">
      <button aria-label="Validar"><svg viewBox="0 0 16 16"><path d="M5 4l3 4 4-5" stroke="#3da333" stroke-width="2"/><path d="M2 12h12M3 10v4M8 10v4M13 10v4" stroke="#333"/></svg></button>
      <button aria-label="Distribuir vertical"><svg viewBox="0 0 16 16"><path d="M2 2.500h12M2 13.500h12M8 4v8M6 6l2-2 2 2M6 10l2 2 2-2M4 8h8" stroke="#333"/></svg></button>
      <button aria-label="Distribuir horizontal"><svg viewBox="0 0 16 16"><path d="M3 2v12M13 2v12M5 8h6M8 5v6M2 2h3M2 14h3M11 2h3M11 14h3" stroke="#333"/></svg></button>
    </div>
  </div>
  <div class="band">
    <div class="group n6">
      <button aria-label="Cota horizontal"><svg viewBox="0 0 16 16"><path d="M2 3v10M14 6v8M2 10h12M10 3H7v4h3" stroke="#333"/><path d="M4 8l-2 2 2 2M12 8l2 2-2 2" stroke="#397c35"/></svg></button>
      <button aria-label="Cota vertical"><svg viewBox="0 0 16 16"><path d="M2 2.500h11M2 13.500h11M5 3v10M13 6h-3v4h3" stroke="#333"/><path d="M3 5l2-2 2 2M3 11l2 2 2-2" stroke="#397c35"/></svg></button>
      <button aria-label="Cota inclinada"><svg viewBox="0 0 16 16"><path d="M2 12l8-9M1 10l4 4M8 2l4 4M14 9h-3v4h3" stroke="#333"/><path d="M2 9v4h3" stroke="#4a4"/></svg></button>
      <button aria-label="Cota contínua"><svg viewBox="0 0 16 16"><path d="M2 8h13M2 4v8M8 5v6M14 4v8M4 6L2 8l2 2M12 6l2 2-2 2" stroke="#333"/></svg></button>
      <button aria-label="Cota acumulada"><svg viewBox="0 0 16 16"><path d="M4 2.500h8M4 8h8M4 13.500h8M8 3v10M6 5l2-2 2 2M6 11l2 2 2-2" stroke="#333"/></svg></button>
      <button aria-label="Cota alinhada"><svg viewBox="0 0 16 16"><path d="M3 13L13 3M2 10l4 4M10 2l4 4M6 7l3 3" stroke="#333"/><path d="M3 10v3h3" stroke="#4a4"/></svg></button>
    </div>
  </div>
  <div class="band">
    <div class="group n7">
      <button aria-label="Medir"><svg viewBox="0 0 16 16"><path d="M3 11l8-8 4 2-8 9z" fill="#82cc70" stroke="#5f9e51"/></svg></button>
      <button aria-label="Medir viga"><svg viewBox="0 0 16 16"><path d="M2 6.500h13M5.500 7v7M11.500 7v7" stroke="#333"/><path d="M4 4l3-2 2 3" stroke="#4a4"/></svg></button>
      <button aria-label="Alinhar"><svg viewBox="0 0 16 16"><path d="M2 8.500h12" stroke="#333"/><path d="M6 6l4 2-4 3z" fill="#4a4" stroke="#4a4"/></svg></button>
      <button aria-label="Suspender"><svg viewBox="0 0 16 16"><path d="M2 2.500h12M4.500 3v11M12.500 3v11" stroke="#333"/><path d="M8.500 4v6" stroke="#4a4" stroke-width="3"/></svg></button>
      <button aria-label="Ângulo"><svg viewBox="0 0 16 16"><path d="M3 3l9 8M2 12h10" stroke="#333"/><path d="M11 14h4v-3" stroke="#4a4"/></svg></button>
      <button aria-label="Altura"><svg viewBox="0 0 16 16"><path d="M3 2.500h11M3 13.500h11"/><path d="M8.500 4v8M6 5h5M6 11h5" stroke="#55ad49" stroke-width="2"/></svg></button>
      <button aria-label="Área"><svg viewBox="0 0 16 16"><path d="M8 7l5 2v5H7z" fill="#ddd" stroke="#888"/><circle cx="7" cy="6" r="4" fill="#79bd65" stroke="#567b48"/><path d="M3 5v6l5 3" stroke="#333"/></svg></button>
    </div>
  </div>
</div>

<footer class="statusbar">
  <svg class="rss" viewBox="0 0 12 12"><rect width="12" height="12" rx="1" fill="#df8d42"/><circle cx="3" cy="9" r="1" fill="#fff"/><path d="M2 5c3 0 5 2 5 5M2 2c5 0 8 3 8 8" fill="none" stroke="#fff"/></svg>
  <span class="cell news-label">Últimas notícias:</span>
  <span class="cell news"><a href="#">Participe da pesquisa de utilização do conceito BIM</a></span>
  <span class="cell spacer"></span>
  <output class="cell coords">-400.9,-615.7</output>
  <span class="cell key">CAPS</span><span class="cell key on">NUM</span><span class="cell key">SCRL</span><span class="cell key">OVR</span>
</footer>
</body>
</html>
```
FILE: styles.css
```css
* { box-sizing: border-box; }

body {
  margin: 0;
  height: 100vh;
  display: flex;
  flex-direction: column;
  overflow: hidden;
  background: #efefef;
  color: #333;
  font: 9px/12px "Liberation Sans", Arial, sans-serif;
  border-bottom: 2px solid #32323a;
}

button, select, input { font: inherit; color: inherit; margin: 0; padding: 0; border: 0; background: none; border-radius: 0; }
h1, h2 { margin: 0; font-weight: normal; }
svg { display: block; }
.sprite { position: absolute; width: 0; height: 0; }

/* Title and menus */
.titlebar { display: flex; align-items: center; height: 18px; padding: 0 12px 0 3px; gap: 4px; background: #fdfdfd; flex: none; }
.logo { width: 12px; height: 12px; }
.app-name { font: 9px/14px "Open Sans", sans-serif; flex: 1; padding-top: 1px; }
.window-buttons { display: flex; gap: 26px; padding: 0 4px 2px 0; }
.window-buttons svg { width: 10px; height: 10px; fill: none; stroke: #444; }

.menubar { display: flex; gap: 11px; height: 16px; padding: 0 6px; background: #fdfdfd; flex: none; }
.menubar button { font: 9px/16px "Open Sans", sans-serif; }

/* Toolbars */
.toolbar { display: flex; flex: none; height: 25px; overflow: hidden; border-top: 1px solid #c9c9c9; }
.toolbar + .toolbar { border-top-color: #bbb; }
.band { display: flex; align-items: center; flex: none; padding: 0 2px 0 9px; border-right: 1px solid #c2c2c2; position: relative; }
.band + .band { margin-left: 2px; }
.band::before { content: ""; position: absolute; left: 2px; top: 1px; bottom: 1px; width: 4px; border: solid #c4c4c4; border-width: 0 1px; }
.main { height: 24px; }
.main .band { padding-right: 0; }
.main .band + .band { margin-left: 1px; }
.draw .band { padding-right: 1px; }
.draw .band:first-child { padding-left: 10px; }
.band.open { border-right: 0; }
.group { display: grid; grid-auto-flow: column; grid-auto-columns: 1fr; }
.group button, .stack button { display: grid; place-items: center; height: 18px; }
.group svg { width: 16px; height: 16px; }
.group svg, .stack svg { fill: none; stroke: #5a5a5a; }
.n1 { width: 18px; }
.n2 { width: 35px; }
.n3 { width: 53px; }
.n4 { width: 71px; }
.n5 { width: 88px; }
.n6 { width: 104px; }
.n7 { width: 124px; }
.n8 { width: 141px; }
.n11 { width: 194px; }
.sep { width: 1px; height: 14px; margin: 0 4px 0 3px; background: #c6c6c6; }
.pressed { background: #fafafa; outline: 1px solid #ccc; outline-offset: -1px; }
.caret { width: 10px; height: 16px; display: grid; place-items: center; }
.caret.wide { width: 20px; }
.caret::before { content: ""; border: solid transparent; border-width: 3px 2px 0; border-top-color: #333; }

.combo { position: relative; height: 17px; border: 1px solid #c3c3c3; background: #e3e3e3; }
.combo select { display: block; width: 100%; height: 100%; padding-left: 3px; appearance: none; }
.combo svg { position: absolute; right: 4px; top: 4px; width: 8px; height: 8px; pointer-events: none; }
.combo.white { background: #fff; border-color: #999; font: 9px/12px "Open Sans", sans-serif; }
.c-style { width: 97px; }
.c-layer { width: 107px; }
.c-style select, .c-layer select { padding-left: 1px; }
.c-level { width: 55px; }
.c-levels { width: 60px; }
.c-floor { width: 96px; }
.swatch { width: 16px; height: 17px; margin: 0 4px 0 2px; background: #438c00; border: 1px solid #376d08; }

/* Workspace */
.workspace { display: flex; flex: 1; min-height: 0; border-top: 1px solid #b5b5b5; }
.side { width: 24px; flex: none; overflow: hidden; padding-top: 1px; }
.side.right { width: 25px; padding-left: 1px; }
.stack { display: grid; grid-auto-rows: 1fr; position: relative; box-sizing: content-box; padding: 9px 0 3px; border-bottom: 1px solid #c0c0c0; }
.stack::before { content: ""; position: absolute; left: 2px; right: 2px; top: 3px; height: 4px; border: solid #c6c6c6; border-width: 1px 0; }
.stack button { height: auto; min-height: 0; width: 23px; }
.stack svg { width: 16px; height: 16px; }
.right .stack button { width: 27px; place-items: center end; }
.right .stack svg { width: 22px; }
.m2 { height: 35px; }
.m3 { height: 53px; }
.m5 { height: 88px; }
.m6 { height: 106px; }
.m10 { height: 176px; }
.m15 { height: 264px; }

.mdi {
  flex: 1;
  min-width: 0;
  display: flex;
  flex-direction: column;
  padding: 0 5px 4px 6px;
  margin-bottom: 1px;
  border: 1px solid #5f7482;
  border-top: 2px solid #707880;
  border-bottom: 2px solid #42748a;
  border-radius: 4px 4px 0 0;
  background: linear-gradient(#9fb4d0, #bacfe9 24px);
}
.mdi-title { display: flex; align-items: center; height: 23px; flex: none; gap: 4px; padding: 4px 1px 0 2px; }
.mdi-icon { width: 12px; height: 11px; }
.mdi-title h2 { font: 9px/14px "Open Sans", sans-serif; flex: 1; color: #26303c; }
.mdi-buttons { display: flex; gap: 1px; }
.mdi-buttons button { width: 26px; height: 14px; display: grid; place-items: center; border: 1px solid #8a9db8; border-radius: 2px; background: linear-gradient(#d2e0f0 50%, #aabfdb 50%); }
.mdi-buttons .flat { border-color: #a9bdd6; background: #b4c8e1; }
.mdi-buttons .close { border-color: #8d3f44; background: linear-gradient(#dd8a83 50%, #c23b34 50%); }
.mdi-buttons svg { width: 10px; height: 8px; }

/* Floor plan */
.drawing { flex: 1; width: 100%; min-height: 0; background: #000; fill: none; shape-rendering: crispEdges; }
.stairs { stroke: #6b6b6b; }
.smooth { shape-rendering: auto; }
.beams { stroke: #b3152c; }
.beams .axis { stroke: #9c0014; }
.beams .arrows { stroke: #b00010; shape-rendering: auto; }
.outline { stroke: #626262; }
.edge { stroke: #b4b4b4; }
.offset { stroke: #d8cc30; stroke-dasharray: 3 2; }
.footing { stroke: #28a890; stroke-dasharray: 3 2; }
.columns { stroke: #2fcfc0; }
.columns circle { fill: #19efef; stroke: none; shape-rendering: auto; }
.columns .selected { fill: #12ffff; stroke: none; }
.cursor { stroke: #f0f0f0; }
.column-names, .beam-names { fill: #f4f4f4; font-family: "Liberation Sans", Arial, sans-serif; }
.column-names { font-size: 32px; }
.beam-names { font-size: 28px; }

/* Bottom bars */
.command { height: 25px; border-top-color: #d0d0d0; }
.command .band { padding-right: 4px; }
.command .prompt { width: 354px; justify-content: flex-end; padding-right: 8px; }
.prompt label { padding-bottom: 4px; margin-right: 1px; }
.prompt input { width: 73px; height: 15px; border: 1px solid #999; background: #fff; }
.scale { margin-left: 5px; }

.statusbar { display: flex; align-items: center; height: 18px; flex: none; padding: 1px 4px 1px 8px; border-top: 1px solid #c4c4c4; gap: 2px; }
.rss { width: 13px; height: 13px; }
.cell { height: 15px; line-height: 15px; border: solid #b5b5b5; border-width: 1px 0 0 1px; white-space: nowrap; }
.news-label { width: 78px; padding-left: 8px; }
.news { width: 458px; padding-left: 3px; }
.news a { color: #3a1ec8; }
.spacer { flex: 1; }
.coords { width: 125px; padding-right: 14px; text-align: center; }
.key { padding: 0 3px 0 4px; color: #999; }
.key.on { color: #222; }
```
